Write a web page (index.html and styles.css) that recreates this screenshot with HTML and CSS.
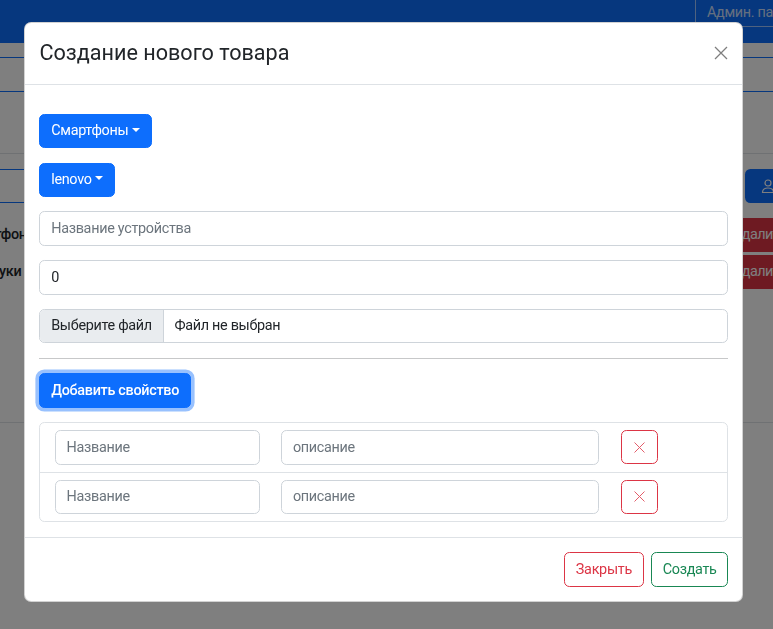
FILE: index.html
```html
<!DOCTYPE html>
<html lang="ru">
<head>
<meta charset="utf-8">
<title>Создание нового товара</title>
<link rel="stylesheet" href="styles.css">
</head>
<body>
<div class="page">
  <nav class="navbar">
    <div class="nav-fill"></div>
    <div class="admin-btn">Админ. панель</div>
  </nav>
  <div class="band"></div>
  <div class="divider divider-top"></div>
  <div class="search-row">
    <div class="search-input"></div>
    <div class="search-btn">
      <svg width="16" height="16" viewBox="0 0 16 16" fill="none" stroke="#fff" stroke-width="1.2"><circle cx="8" cy="5" r="3"/><path d="M2.5 14.5c0-3 2.5-4.5 5.5-4.5s5.5 1.5 5.5 4.5z"/></svg>
    </div>
  </div>
  <div class="item-row first">
    <div class="item-name">Смартфоны</div>
    <div class="del-btn">Удалить</div>
  </div>
  <div class="item-row">
    <div class="item-name">Ноутбуки</div>
    <div class="del-btn">Удалить</div>
  </div>
  <div class="divider divider-bottom"></div>
</div>

<div class="backdrop"></div>

<div class="modal">
  <div class="modal-header">
    <h4 class="modal-title">Создание нового товара</h4>
    <button class="btn-close" type="button" aria-label="Close">
      <svg width="14" height="14" viewBox="0 0 14 14"><path d="M1 1L13 13M13 1L1 13" stroke="#000" stroke-width="1.3" fill="none"/></svg>
    </button>
  </div>
  <div class="modal-body">
    <div class="field"><button class="btn btn-primary dropdown-toggle" type="button">Смартфоны</button></div>
    <div class="field"><button class="btn btn-primary dropdown-toggle" type="button">lenovo</button></div>
    <input class="form-control field" type="text" placeholder="Название устройства">
    <input class="form-control field" type="text" value="0">
    <div class="form-control file field"><span class="file-btn">Выберите файл</span><span class="file-name">Файл не выбран</span></div>
    <hr class="sep">
    <button class="btn btn-primary btn-focus" type="button">Добавить свойство</button>
    <div class="props">
      <div class="prop-row">
        <div class="prop-grid">
          <div class="col-4"><input class="form-control" type="text" placeholder="Название"></div>
          <div class="col-6"><input class="form-control" type="text" placeholder="описание"></div>
          <div class="col-2"><button class="btn btn-outline-danger btn-x" type="button"><svg width="11" height="11" viewBox="0 0 11 11"><path d="M0.5 0.5L10.5 10.5M10.5 0.5L0.5 10.5" stroke="#e35d6a" stroke-width="1" fill="none"/></svg></button></div>
        </div>
      </div>
      <div class="prop-row">
        <div class="prop-grid">
          <div class="col-4"><input class="form-control" type="text" placeholder="Название"></div>
          <div class="col-6"><input class="form-control" type="text" placeholder="описание"></div>
          <div class="col-2"><button class="btn btn-outline-danger btn-x" type="button"><svg width="11" height="11" viewBox="0 0 11 11"><path d="M0.5 0.5L10.5 10.5M10.5 0.5L0.5 10.5" stroke="#e35d6a" stroke-width="1" fill="none"/></svg></button></div>
        </div>
      </div>
    </div>
  </div>
  <div class="modal-footer">
    <button class="btn btn-outline-danger" type="button">Закрыть</button>
    <button class="btn btn-outline-success" type="button">Создать</button>
  </div>
</div>
</body>
</html>
```

FILE: styles.css
```css
* { box-sizing: border-box; }
html, body { margin: 0; padding: 0; }
body {
  font-family: Roboto, "Segoe UI", "Liberation Sans", sans-serif;
  font-size: 14.4px;
  line-height: 1.5;
  letter-spacing: -0.3px;
  color: #212529;
  background: #fff;
  overflow: hidden;
}
.page { width: 773px; height: 629px; overflow: hidden; }

/* background page */
.navbar {
  height: 43px;
  background: #0d6efd;
  display: grid;
  grid-template-columns: 1fr 78px;
  overflow: hidden;
}
.admin-btn {
  width: 130px;
  height: 27px;
  padding: 2px 11px;
  border: 1px solid rgba(255,255,255,.6);
  border-top: 0;
  color: rgba(255,255,255,.8);
  line-height: 21.6px;
  white-space: nowrap;
}
.band {
  margin-top: 14px;
  height: 35px;
  border-top: 1px solid #0d6efd;
  border-bottom: 1px solid #0d6efd;
}
.divider { border-top: 1px solid #dee2e6; }
.divider-top { margin-top: 61px; }
.divider-bottom { margin-top: 133px; }
.search-row {
  margin-top: 15px;
  height: 34px;
  display: flex;
  gap: 5px;
}
.search-input {
  flex: 1;
  border: 1px solid #0d6efd;
  border-left: 0;
}
.search-btn {
  width: 40px;
  margin-right: -12px;
  background: #0d6efd;
  border-radius: 5.4px 0 0 5.4px;
  display: flex;
  align-items: center;
  padding-left: 15px;
}
.item-row {
  margin-top: 3px;
  height: 34px;
  display: flex;
  justify-content: space-between;
}
.item-row.first { margin-top: 15px; }
.item-name {
  margin-left: -40px;
  width: 90px;
  display: flex;
  align-items: center;
  white-space: nowrap;
  font-weight: 500;
}
.del-btn {
  width: 76px;
  margin-right: -30px;
  background: #dc3545;
  color: #fff;
  padding: 6px 7px;
  line-height: 21.6px;
  letter-spacing: -0.6px;
  white-space: nowrap;
  border-radius: 5.4px 0 0 5.4px;
}

.backdrop {
  position: fixed;
  inset: 0;
  background: rgba(0,0,0,.5);
}

/* modal */
.modal {
  position: fixed;
  left: 24px;
  top: 22px;
  width: 719px;
  background: #fff;
  border: 1px solid rgba(0,0,0,.175);
  border-radius: 7.2px;
}
.modal-header {
  display: flex;
  align-items: center;
  justify-content: space-between;
  padding: 14.4px;
  border-bottom: 1px solid #dee2e6;
}
.modal-title {
  margin: 0;
  font-size: 21.6px;
  line-height: 1.5;
  font-weight: 400;
  letter-spacing: 0;
  color: #212529;
}
.btn-close {
  width: 14px;
  height: 14px;
  padding: 0;
  margin: 0 0 2px 0;
  border: 0;
  background: transparent;
  opacity: .5;
  display: flex;
}
.modal-body { padding: 14.4px; }
.field { margin-top: 14.4px; }

.btn {
  display: inline-block;
  padding: 5.4px 10.8px;
  font-family: inherit;
  font-size: 14.4px;
  line-height: 21.6px;
  letter-spacing: -0.3px;
  font-weight: 400;
  border: 1px solid transparent;
  border-radius: 5.4px;
  background: transparent;
  cursor: pointer;
}
.btn-primary {
  color: #fff;
  background: #0d6efd;
  border-color: #0d6efd;
}
.btn-focus {
  font-weight: 500;
  box-shadow: 0 0 0 3.6px rgba(49,132,253,.5);
}
.dropdown-toggle::after {
  content: "";
  display: inline-block;
  margin-left: .255em;
  vertical-align: .255em;
  border-top: .3em solid;
  border-right: .3em solid transparent;
  border-left: .3em solid transparent;
  border-bottom: 0;
}
.btn-outline-danger { color: #dc3545; border-color: #dc3545; }
.btn-outline-success { color: #198754; border-color: #198754; }

.form-control {
  display: block;
  width: 100%;
  padding: 5.4px 10.8px;
  font-family: inherit;
  font-size: 14.4px;
  line-height: 21.6px;
  letter-spacing: -0.3px;
  color: #212529;
  background: #fff;
  border: 1px solid #ced4da;
  border-radius: 5.4px;
  outline: none;
}
.form-control::placeholder { color: #6c757d; opacity: 1; }
.file {
  display: flex;
  padding: 0;
  overflow: hidden;
}
.file-btn {
  padding: 5.4px 10.8px;
  background: #e9ecef;
  border-right: 1px solid #ced4da;
  margin-right: 10.8px;
}
.file-name { padding: 5.4px 0; }

.sep {
  margin: 14.4px 0;
  border: 0;
  border-top: 1px solid #212529;
  opacity: .25;
}

.props {
  margin-top: 14.4px;
  border: 1px solid #dee2e6;
  border-radius: 5.4px;
}
.prop-row { padding: 7.2px 14.4px; }
.prop-row + .prop-row { border-top: 1px solid #dee2e6; }
.prop-grid {
  display: flex;
  margin: 0 -10.8px;
}
.col-4 { width: 33.3333%; padding: 0 10.8px; }
.col-6 { width: 50%; padding: 0 10.8px; }
.col-2 { width: 16.6667%; padding: 0 10.8px; }
.btn-x {
  width: 37.4px;
  height: 34.2px;
  padding: 0;
  display: flex;
  align-items: center;
  justify-content: center;
}

.modal-footer {
  display: flex;
  justify-content: flex-end;
  padding: 10.8px;
  padding-right: 10px;
  border-top: 1px solid #dee2e6;
}
.modal-footer .btn { margin: 3.6px; }
```
